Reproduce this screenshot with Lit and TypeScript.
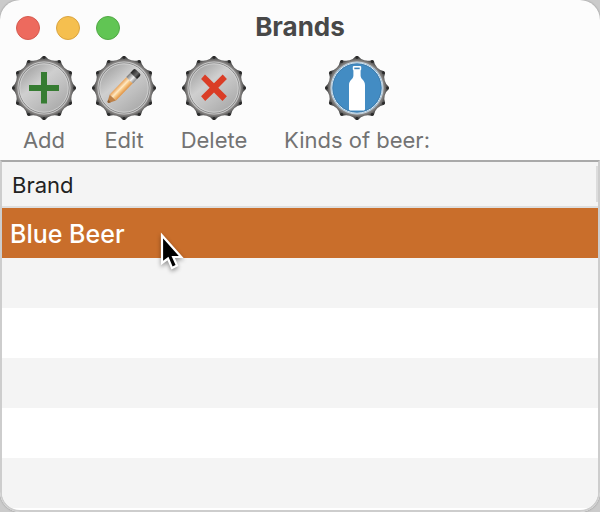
import { LitElement, html, css, svg, TemplateResult } from "lit";
import { customElement, property } from "lit/decorators.js";

type CapKind = "add" | "edit" | "delete" | "bottle";

const capOutline = (): string => {
  let d = "";
  for (let i = 0; i < 12; i++) {
    const a = (i * Math.PI) / 6;
    const at = (r: number, offset: number) =>
      `${(32 + r * Math.cos(a + offset)).toFixed(2)} ${(32 + r * Math.sin(a + offset)).toFixed(2)}`;
    d += `${i ? "L" : "M"}${at(31.9, -0.03)}L${at(31.9, 0.03)}Q${at(28.9, 0.12)} ${at(28.7, Math.PI / 12)}Q${at(28.9, 0.4)} ${at(31.9, Math.PI / 6 - 0.03)}`;
  }
  return d + "Z";
};

const capTips = Array.from({ length: 12 }, (_, i) => {
  const a = (i * Math.PI) / 6;
  return { x: 32 + 30.4 * Math.cos(a), y: 32 + 30.4 * Math.sin(a) };
});

@customElement("bottle-cap")
export class BottleCap extends LitElement {
  @property() kind: CapKind = "add";

  static styles = css`
    :host { display: block; width: 64px; height: 64px; }
    svg { display: block; width: 100%; height: 100%; }
  `;

  private symbol() {
    switch (this.kind) {
      case "add":
        return svg`<path d="M29 16h6v13h12v6H35v12.5h-6V35H17v-6h12z" fill="#367c32"/>`;
      case "delete":
        return svg`<path d="M23 18.6l9 8.6 8.7-8.6 4.2 4.4-8.6 8.8 8.6 8.5-4.4 4.8-8.5-8.7-8.8 8.7-4.1-4.8 8.6-8.5-8.6-8.8z" fill="#da3d26"/>`;
      case "edit":
        return svg`
          <g transform="translate(16 46.5) rotate(-46)">
            <path d="M0-.8L7-4.4v8.8L0 .8z" fill="#bd8148"/>
            <path d="M0-.8L2.2-1.8v3.6L0 .8z" fill="#8d6036"/>
            <path d="M7-4.4h24v8.8H7z" fill="url(#wood)"/>
            <path d="M31-4.6h6v9.2h-6z" fill="url(#ferrule)"/>
            <path d="M37-4.6h4a2 2 0 0 1 2 2v5.2a2 2 0 0 1-2 2h-4z" fill="url(#eraser)"/>
          </g>`;
      case "bottle":
        return svg`
          <path d="M28.6 10h6.8l.8.8v2.8l-.6 1v5c0 3.8 4.4 4.6 4.4 9.5v24.2c0 .7-.5 1.2-1.2 1.2H25.200c-.7 0-1.200-.5-1.200-1.200V29.100c0-4.900 4.400-5.700 4.400-9.500v-5l-.6-1v-2.800z" fill="#fff"/>
          <path d="M29.300 11.600h5.400v1.600h-5.400z" fill="#3f83b7"/>`;
    }
  }

  render() {
    const blue = this.kind === "bottle";
    return html`
      <svg viewBox="0 0 64 64" aria-hidden="true">
        <defs>
          <radialGradient id="rim" gradientUnits="userSpaceOnUse" cx="32" cy="32" r="32">
            <stop offset=".8" stop-color="#9c9a99"/><stop offset=".87" stop-color="#787675"/>
            <stop offset=".92" stop-color="#555"/><stop offset="1" stop-color="#222"/>
          </radialGradient>
          <linearGradient id="metal" x1=".1" y1=".05" x2=".85" y2="1">
            <stop offset="0" stop-color="#9a9a9a"/><stop offset=".38" stop-color="#cfcfcf"/>
            <stop offset=".65" stop-color="#bebebe"/><stop offset="1" stop-color="#a4a4a4"/>
          </linearGradient>
          <linearGradient id="wood" x1="0" y1="0" x2="0" y2="1">
            <stop offset="0" stop-color="#e8a055"/><stop offset=".42" stop-color="#ffe9c4"/>
            <stop offset=".6" stop-color="#f8ca88"/><stop offset="1" stop-color="#e09243"/>
          </linearGradient>
          <linearGradient id="ferrule" x1="0" y1="0" x2="0" y2="1">
            <stop offset="0" stop-color="#777"/><stop offset=".6" stop-color="#eee"/><stop offset="1" stop-color="#888"/>
          </linearGradient>
          <linearGradient id="eraser" x1="0" y1="0" x2="0" y2="1">
            <stop offset="0" stop-color="#222"/><stop offset=".6" stop-color="#666"/><stop offset="1" stop-color="#171717"/>
          </linearGradient>
        </defs>
        <path d=${capOutline()} fill="url(#rim)"/>
        ${capTips.map((t) => svg`<circle cx=${t.x} cy=${t.y} r="1.3" fill="#2b2b2b"/>`)}
        <circle cx="32" cy="32" r="26" fill=${blue ? "#438cc3" : "url(#metal)"} stroke=${blue ? "#c9d4dc" : "#c8c8c8"} stroke-width="1"/>
        <circle cx="32" cy="32" r="25" fill="none" stroke=${blue ? "#e4eef5" : "#8a8a8a"} stroke-width="1"/>
        <circle cx="32" cy="32" r="24.2" fill="none" stroke=${blue ? "#3b78a8" : "#d8d8d8"} stroke-width=".8"/>
        ${this.symbol()}
      </svg>`;
  }
}

@customElement("app-root")
export class AppRoot extends LitElement {
  static styles = css`
    :host {
      display: block;
      background: #cbcbcb;
      font-family: Inter, "Liberation Sans", sans-serif;
    }
    * { box-sizing: border-box; }
    .window {
      display: flex;
      flex-direction: column;
      min-height: 100vh;
      overflow: hidden;
      border-radius: 20px;
      background: #fcfcfc;
      box-shadow: 0 0 2px #888;
    }
    .titlebar {
      display: grid;
      grid-template-columns: 1fr auto 1fr;
      align-items: center;
      height: 56px;
      padding: 0 16px;
    }
    .lights { display: flex; gap: 16px; }
    .light {
      width: 24px;
      height: 24px;
      padding: 0;
      border: 1px solid;
      border-radius: 50%;
    }
    .close { background: #ed6a5e; border-color: #d55b50; }
    .minimize { background: #f5bf4f; border-color: #d9a441; }
    .zoom { background: #61c554; border-color: #52a846; }
    h1 {
      margin: 0;
      padding-bottom: 2px;
      color: #484848;
      font-size: 26px;
      font-weight: 700;
      line-height: 32px;
    }
    .toolbar {
      display: flex;
      gap: 16px;
      height: 104px;
      padding: 0 12px;
    }
    .tool {
      display: flex;
      flex-direction: column;
      align-items: center;
      gap: 4px;
      min-width: 64px;
      height: 96px;
      padding: 0;
      border: 0;
      background: none;
      color: #737373;
      font: 22px/32px Inter, "Liberation Sans", sans-serif;
      white-space: nowrap;
    }
    .tool.delete { min-width: 68px; margin: 0 8px; }
    .tool.kinds { margin-left: 12px; }
    .list {
      flex: 1;
      border: 2px solid #cdcdcd;
      border-top-color: #a9a9a9;
      border-radius: 0 0 20px 20px;
      background: #fff;
      overflow: hidden;
    }
    table {
      width: 100%;
      border-collapse: separate;
      border-spacing: 0;
    }
    th, td { padding: 2px 8px 0; text-align: left; font-weight: 400; }
    th {
      height: 46px;
      padding: 2px 10px 0;
      border-bottom: 2px solid #dedede;
      background: linear-gradient(#dcdcdc, #dcdcdc) right center / 2px 36px no-repeat #f4f4f4;
      color: #222;
      font-size: 22px;
      line-height: 24px;
    }
    td { height: 50px; font-size: 25px; font-weight: 500; line-height: 32px; }
    tr:nth-child(even) td { background: #f4f4f4; }
    .selected td { background: #c96e2b; color: #fff; }
    .cell { position: relative; }
    .pointer {
      position: absolute;
      left: 148px;
      top: 12px;
      width: 32px;
      height: 44px;
      overflow: visible;
      filter: drop-shadow(0 2px 2px #0006);
    }
  `;

  private tool(kind: CapKind, label: string, name: string): TemplateResult {
    return html`<button class="tool ${name}" type="button">
      <bottle-cap .kind=${kind}></bottle-cap><span>${label}</span>
    </button>`;
  }

  render() {
    return html`
      <main class="window">
        <header class="titlebar">
          <div class="lights">
            <button class="light close" type="button" aria-label="Close"></button>
            <button class="light minimize" type="button" aria-label="Minimize"></button>
            <button class="light zoom" type="button" aria-label="Zoom"></button>
          </div>
          <h1>Brands</h1>
        </header>
        <nav class="toolbar" aria-label="Brand actions">
          ${this.tool("add", "Add", "add")}
          ${this.tool("edit", "Edit", "edit")}
          ${this.tool("delete", "Delete", "delete")}
          ${this.tool("bottle", "Kinds of beer:", "kinds")}
        </nav>
        <section class="list">
          <table>
            <thead><tr><th scope="col">Brand</th></tr></thead>
            <tbody>
              <tr class="selected" aria-selected="true">
                <td>
                  <div class="cell">
                    Blue Beer
                    <svg class="pointer" viewBox="0 0 32 44" aria-hidden="true">
                      <path d="M4 5.500v27.500l6-4.500 4 9.500 5-2.500-3.800-8.500h8z" fill="#000" stroke="#fff" stroke-width="2.2"/>
                    </svg>
                  </div>
                </td>
              </tr>
              ${[1, 2, 3, 4, 5].map(() => html`<tr><td></td></tr>`)}
            </tbody>
          </table>
        </section>
      </main>`;
  }
}
